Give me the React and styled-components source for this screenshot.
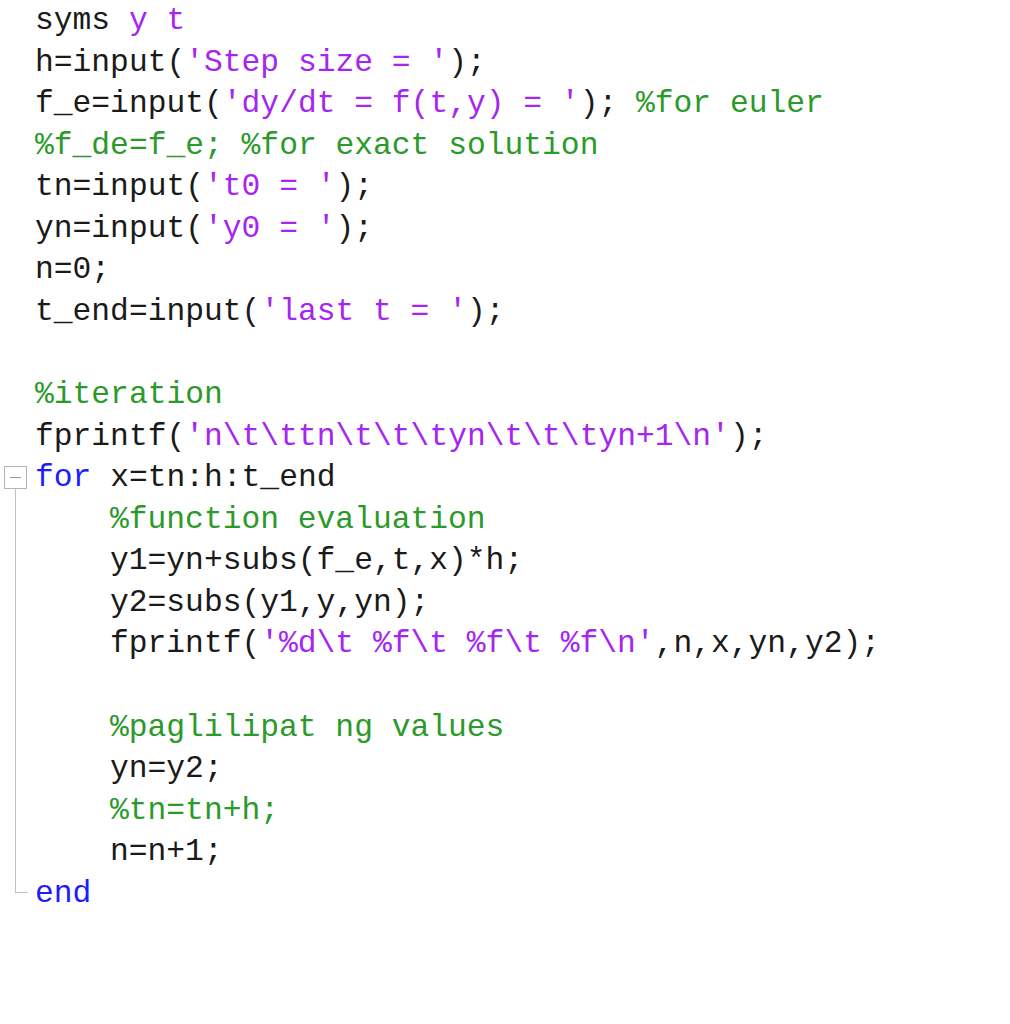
import styled, { createGlobalStyle } from "styled-components";

const GlobalStyle = createGlobalStyle`
  html, body {
    margin: 0;
    padding: 0;
    background: #ffffff;
  }
`;

const LINE_H = 41.57;

const Editor = styled.div`
  width: 1010px;
  height: 1024px;
  background: #ffffff;
  font-family: "Courier New", "Nimbus Mono PS", "FreeMono", Courier, "Liberation Mono", monospace;
  font-size: 31.3px;
  color: #1a1a1a;
`;

const Row = styled.div`
  display: flex;
  height: ${LINE_H}px;
  line-height: ${LINE_H}px;
  white-space: pre;
`;

const Gutter = styled.div`
  flex: 0 0 35px;
  height: 100%;
  display: flex;
  flex-direction: column;
  align-items: ${(p) => (p.$kind === "end" ? "flex-start" : "center")};
  width: 35px;
  padding-right: 5px;
  box-sizing: border-box;
`;

const Spacer = styled.div`
  flex: 1;
`;

const FoldBox = styled.div`
  flex: 0 0 auto;
  width: 21px;
  height: 21px;
  border: 1px solid #b4b4b4;
  background: #ffffff;
  display: flex;
  align-items: center;
  justify-content: center;
  &::after {
    content: "";
    width: 11px;
    height: 1px;
    background: #9a9a9a;
  }
`;

const FoldLine = styled.div`
  flex: 1;
  width: 1px;
  background: #c0c0c0;
`;

const FoldEnd = styled.div`
  margin-left: 15px;
  height: calc(50% - 2px);
  width: 12px;
  border-left: 1px solid #c0c0c0;
  border-bottom: 1px solid #c0c0c0;
`;

const Code = styled.div`
  padding-left: ${(p) => p.$indent * 75}px;
`;

const colors = {
  k: "#1c1cff",
  s: "#a526f0",
  c: "#2b9a2b",
  t: "#1a1a1a",
};

const Tok = styled.span`
  color: ${(p) => colors[p.$type]};
`;

const lines = [
  { i: 0, toks: [["t", "syms "], ["s", "y t"]] },
  { i: 0, toks: [["t", "h=input("], ["s", "'Step size = '"], ["t", ");"]] },
  { i: 0, toks: [["t", "f_e=input("], ["s", "'dy/dt = f(t,y) = '"], ["t", "); "], ["c", "%for euler"]] },
  { i: 0, toks: [["c", "%f_de=f_e; %for exact solution"]] },
  { i: 0, toks: [["t", "tn=input("], ["s", "'t0 = '"], ["t", ");"]] },
  { i: 0, toks: [["t", "yn=input("], ["s", "'y0 = '"], ["t", ");"]] },
  { i: 0, toks: [["t", "n=0;"]] },
  { i: 0, toks: [["t", "t_end=input("], ["s", "'last t = '"], ["t", ");"]] },
  { i: 0, toks: [] },
  { i: 0, toks: [["c", "%iteration"]] },
  { i: 0, toks: [["t", "fprintf("], ["s", "'n\\t\\ttn\\t\\t\\tyn\\t\\t\\tyn+1\\n'"], ["t", ");"]] },
  { i: 0, fold: "start", toks: [["k", "for "], ["t", "x=tn:h:t_end"]] },
  { i: 1, fold: "in", toks: [["c", "%function evaluation"]] },
  { i: 1, fold: "in", toks: [["t", "y1=yn+subs(f_e,t,x)*h;"]] },
  { i: 1, fold: "in", toks: [["t", "y2=subs(y1,y,yn);"]] },
  { i: 1, fold: "in", toks: [["t", "fprintf("], ["s", "'%d\\t %f\\t %f\\t %f\\n'"], ["t", ",n,x,yn,y2);"]] },
  { i: 1, fold: "in", toks: [] },
  { i: 1, fold: "in", toks: [["c", "%paglilipat ng values"]] },
  { i: 1, fold: "in", toks: [["t", "yn=y2;"]] },
  { i: 1, fold: "in", toks: [["c", "%tn=tn+h;"]] },
  { i: 1, fold: "in", toks: [["t", "n=n+1;"]] },
  { i: 0, fold: "end", toks: [["k", "end"]] },
];

function FoldMark({ kind }) {
  if (kind === "start")
    return (
      <>
        <Spacer />
        <FoldBox />
        <FoldLine />
      </>
    );
  if (kind === "in") return <FoldLine />;
  if (kind === "end") return <FoldEnd />;
  return null;
}

export default function App() {
  return (
    <>
      <GlobalStyle />
      <Editor>
        {lines.map((line, n) => (
          <Row key={n}>
            <Gutter $kind={line.fold}>
              <FoldMark kind={line.fold} />
            </Gutter>
            <Code $indent={line.i}>
              {line.toks.map(([type, text], j) => (
                <Tok key={j} $type={type}>
                  {text}
                </Tok>
              ))}
            </Code>
          </Row>
        ))}
      </Editor>
    </>
  );
}
